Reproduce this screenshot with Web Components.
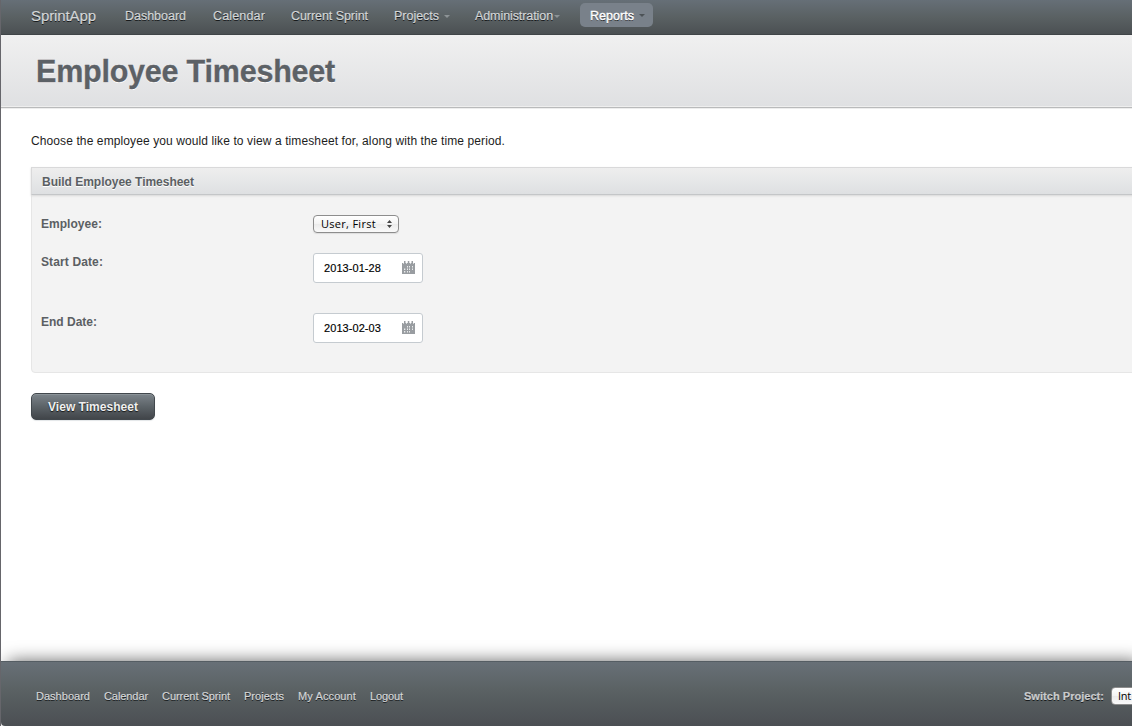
<!DOCTYPE html>
<html lang="en">
<head>
<meta charset="utf-8">
<title>SprintApp</title>
<style>
html, body { margin: 0; height: 100%; overflow: hidden; background: #fff; font-family: "Liberation Sans", Arial, sans-serif; }
</style>
</head>
<body>
<sprint-app></sprint-app>
<script>
const define = (name, html, setup) => customElements.define(name, class extends HTMLElement {
  connectedCallback() {
    if (this.shadowRoot) return;
    this.attachShadow({ mode: 'open' }).innerHTML = html;
    if (setup) setup(this, this.shadowRoot);
  }
});

// Single line of text tracked to fill the width given in "w".
define('fit-text', `<style>
:host { display: block; flex: none; white-space: nowrap; }
span { display: inline-block; }
</style><span><slot></slot></span>`, (el, root) => {
  const w = +el.getAttribute('w');
  const span = root.querySelector('span');
  el.style.width = w + 'px';
  const natural = span.getBoundingClientRect().width;
  span.style.letterSpacing = ((w - natural) / el.textContent.length) + 'px';
});

define('nav-item', `<style>
:host { display: flex; align-items: center; height: 24px; margin-left: var(--gap, 27px); flex: none; }
:host([active]) { box-sizing: border-box; background: #79818a; border-radius: 5px; padding: 1px 8px 0 10px; color: #fff; -webkit-text-stroke: .4px #fff; }
:host([caret])::after { content: ""; border: 3.5px solid transparent; border-top: 3.5px solid #8d9396; border-bottom: 0; margin-left: var(--caret-gap, 5px); }
:host([active])::after { border-top-color: #4c5256; }
</style><slot></slot>`);

define('top-nav', `<style>
:host { display: flex; align-items: flex-start; box-sizing: border-box; height: 35px; padding: 4px 0 0 30px; background: linear-gradient(#666f77, #5a6163 50%, #4b5053); border-bottom: 1px solid #404548; color: #d4d7d8; font-size: 12.5px; text-shadow: 0 1px 0 #171a1c; -webkit-text-stroke: .2px #d4d7d8; }
.brand { font-size: 15px; line-height: 24px; }
</style>
<fit-text class="brand" w="65">SprintApp</fit-text>
<nav-item style="--gap:29px"><fit-text w="61">Dashboard</fit-text></nav-item>
<nav-item style="--gap:27px"><fit-text w="52">Calendar</fit-text></nav-item>
<nav-item style="--gap:26px"><fit-text w="77">Current Sprint</fit-text></nav-item>
<nav-item caret style="--gap:26px"><fit-text w="45">Projects</fit-text></nav-item>
<nav-item caret style="--gap:25px;--caret-gap:1px"><fit-text w="78">Administration</fit-text></nav-item>
<nav-item active caret style="--gap:20px;margin-top:-1px"><fit-text w="44">Reports</fit-text></nav-item>`);

define('page-title', `<style>
:host { display: block; box-sizing: border-box; height: 73px; padding: 18px 0 0 35px; background: linear-gradient(#f0f0f0, #dfe0e2); border-bottom: 1px solid #b9babb; box-shadow: inset 0 -1px #eee, 0 1px #ededed; color: #5c6166; font-size: 30.5px; font-weight: bold; line-height: 36px; text-shadow: 0 1px 0 #fff; -webkit-text-stroke: .3px #5c6166; }
</style><slot></slot>`);

define('pop-select', `<style>
:host { display: flex; align-items: center; box-sizing: border-box; width: 86px; height: 18px; padding: 0 6px 1px 7px; border: 1px solid #8d8d8d; border-radius: 4px; background: linear-gradient(#fff, #f3f3f3 50%, #ebebeb 51%, #fafafa); color: #000; font: 11px "Open Sans", "Liberation Sans", sans-serif; text-shadow: none; -webkit-text-stroke: 0; justify-content: space-between; box-shadow: var(--glow, 0 1px 1px #ddd); }
svg { position: relative; top: .5px; }
</style><slot></slot><svg width="5" height="8" viewBox="0 0 5 8"><path d="M2.5 0 5 3H0ZM2.5 8 0 5h5Z" fill="#444"/></svg>`);

define('date-field', `<style>
:host { display: flex; align-items: center; justify-content: space-between; box-sizing: border-box; width: 110px; height: 30px; padding: 0 7px 0 10px; background: #fff; border: 1px solid #c5cbd0; border-radius: 3px; color: #000; font-size: 11px; -webkit-text-stroke: .15px #000; }
svg { position: relative; top: -.5px; }
</style><slot></slot>
<svg width="13" height="13" viewBox="0 0 13 13"><path fill="#999da1" d="M0 2h13v11H0Z"/><path fill="#d5d8da" d="M1 2h1v1H1zm3 0h1v1H4zm4 0h1v1H8zm3 0h1v1h-1z"/><path fill="#999da1" d="M2 0h1.500v3H2ZM5.800 0h1.500v3H5.800ZM9.500 0H11v3H9.500Z"/><path fill="#e9ebec" d="M5 5h1v1.500H5zm2 0h1v1.500H7zm3 0h1v1.500h-1zM2 7.500h1.300V9H2zm3 0h1V9H5zm2 0h1V9H7zm3 0h1V9h-1zM2 10h1.300v1.500H2zm3 0h1v1.500H5zm2 0h1v1.500H7z"/></svg>`);

define('form-row', `<style>
:host { display: grid; grid-template-columns: 272px auto; justify-content: start; align-items: start; color: #5b5f63; }
.label { font-size: 12px; font-weight: bold; line-height: 18px; }
</style><div class="label"><slot name="label"></slot></div><slot></slot>`);

define('form-panel', `<style>
:host { display: block; box-sizing: border-box; height: 206px; margin-right: -10px; background: #f3f3f3; border: 1px solid #e6e6e6; border-radius: 0 0 4px 4px; }
header { box-sizing: border-box; height: 28px; margin: -1px 0 0 -1px; padding: 0 0 0 10px; border: 1px solid #d9d9da; border-bottom-color: #c4c6c8; background: linear-gradient(#eee, #dee0e2); box-shadow: 0 1px 2px #d8d8d8; color: #5b5f63; font-size: 12px; font-weight: bold; line-height: 28px; text-shadow: 0 1px #fff; }
.body { padding: 20px 0 0 9px; display: grid; grid-template-rows: 38px 60px 60px; }
</style><header><slot name="title"></slot></header><div class="body"><slot></slot></div>`);

define('dark-button', `<style>
:host { display: flex; justify-content: center; align-items: center; box-sizing: border-box; width: 124px; height: 27px; border: 1px solid #42484d; border-radius: 5px; background: linear-gradient(#7c848a, #5c6368 50%, #414549); box-shadow: inset 0 1px #8b9398, 0 1px 1px #e3e6e8; color: #f0f0f0; font-size: 12px; font-weight: bold; text-shadow: 0 1px 1px #151515; }
</style><slot></slot>`);

define('page-footer', `<style>
:host { display: flex; align-items: flex-start; box-sizing: border-box; height: 65px; padding: 25px 0 0 35px; border-top: 1px solid #555d63; background: linear-gradient(#687077, #5a6163 45%, #4b4f53); box-shadow: 7px 0 17px rgba(0,0,0,.6); color: #d6d8d9; font-size: 11px; line-height: 18px; text-shadow: 0 1px #191c1e; -webkit-text-stroke: .2px #d6d8d9; border-bottom-left-radius: 4px; }
nav { display: flex; gap: 14px; flex: 1; }
.switch { display: flex; gap: 7px; width: 108px; flex: none; font-weight: bold; color: #c9cbcc; }
pop-select { flex: none; font-weight: normal; --glow: none; padding-left: 6px; }
</style>
<nav><fit-text w="54">Dashboard</fit-text><fit-text w="44">Calendar</fit-text><fit-text w="68">Current Sprint</fit-text><fit-text w="40">Projects</fit-text><fit-text w="58">My Account</fit-text><fit-text w="33">Logout</fit-text></nav>
<div class="switch"><fit-text w="80">Switch Project:</fit-text><pop-select><fit-text w="13">Int</fit-text></pop-select></div>`);

define('sprint-app', `<style>
:host { display: flex; flex-direction: column; box-sizing: border-box; width: 100vw; height: 726px; border-left: 1px solid #66666b; overflow: hidden; }
main { flex: 1; padding: 25px 0 0 30px; }
.intro { font-size: 12px; line-height: 16px; color: #1d1d1d; margin-bottom: 18px; }
dark-button { margin-top: 20px; }
</style>
<top-nav></top-nav>
<page-title><fit-text w="299">Employee Timesheet</fit-text></page-title>
<main>
<fit-text class="intro" w="474">Choose the employee you would like to view a timesheet for, along with the time period.</fit-text>
<form-panel>
<fit-text slot="title" w="152">Build Employee Timesheet</fit-text>
<form-row><fit-text slot="label" w="61">Employee:</fit-text><pop-select><fit-text w="55">User, First</fit-text></pop-select></form-row>
<form-row><fit-text slot="label" w="62">Start Date:</fit-text><date-field><fit-text w="57">2013-01-28</fit-text></date-field></form-row>
<form-row><fit-text slot="label" w="56">End Date:</fit-text><date-field><fit-text w="57">2013-02-03</fit-text></date-field></form-row>
</form-panel>
<dark-button><fit-text w="90">View Timesheet</fit-text></dark-button>
</main>
<page-footer></page-footer>`);
</script>
</body>
</html>
